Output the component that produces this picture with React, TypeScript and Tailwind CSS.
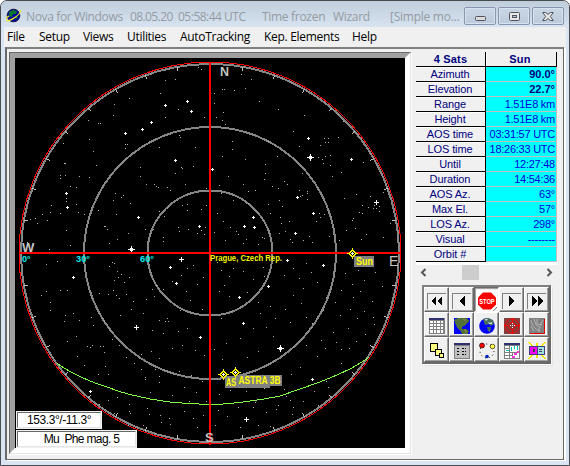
import type { ReactNode } from "react";

const menu = [
  { label: "File", width: "w-[32px]" },
  { label: "Setup", width: "w-[44px]" },
  { label: "Views", width: "w-[44px]" },
  { label: "Utilities", width: "w-[53px]" },
  { label: "AutoTracking", width: "w-[84px]" },
  { label: "Kep. Elements", width: "w-[88px]" },
  { label: "Help", width: "w-[40px]" },
];

const rows = [
  ["Azimuth", "90.0°"],
  ["Elevation", "22.7°"],
  ["Range", "1.51E8 km"],
  ["Height", "1.51E8 km"],
  ["AOS time", "03:31:57 UTC"],
  ["LOS time", "18:26:33 UTC"],
  ["Until", "12:27:48"],
  ["Duration", "14:54:36"],
  ["AOS Az.", "63°"],
  ["Max El.", "57°"],
  ["LOS Az.", "298°"],
  ["Visual", "--------"],
  ["Orbit #", ""],
];

// faint stars, one pixel each
const faint =
  "198,67 175,79 165,80 201,69 160,93 129,98 114,104 178,109 113,115 165,117 204,117 88,120 100,123 98,123 89,139 63,143 125,144 127,144 125,148 93,151 64,163 65,163 96,165 179,135 180,137 159,147 195,147 181,167 182,168 193,166 175,173 60,175 65,175 60,178 79,176 89,177 140,167 140,176 146,184 154,184 156,186 158,187 170,190 167,187 185,184 206,188 70,186 76,187 66,198 66,201 76,204 115,193 113,200 121,197 130,203 123,195 51,205 50,212 60,213 42,214 35,218 30,219 37,223 47,220 66,230 78,212 84,214 98,210 116,214 104,226 105,226 107,229 117,239 128,233 145,229 163,237 163,241 179,231 178,227 188,229 197,233 182,205 187,204 187,210 206,205 201,209 159,211 164,216 201,230 204,234 49,249 70,245 27,242 33,245 109,243 153,229 " +
  "241,74 251,79 222,89 224,89 234,90 245,88 214,93 214,103 259,101 278,109 304,115 223,112 216,117 222,120 225,124 338,114 343,121 293,131 268,141 232,141 324,138 328,142 325,142 328,138 320,145 338,137 232,149 245,159 222,156 299,146 325,156 330,155 322,159 323,163 330,165 318,157 277,156 265,164 363,162 341,172 332,176 302,173 265,173 264,179 284,181 287,184 278,188 272,186 248,191 255,190 307,191 307,193 302,195 300,196 307,199 299,190 243,184 228,176 221,193 219,185 233,200 248,203 268,204 279,200 282,206 270,213 280,217 289,221 281,223 285,231 279,233 290,239 292,242 303,240 309,236 312,242 316,221 320,217 324,214 319,213 329,236 332,227 344,198 356,194 370,196 374,205 376,208 373,208 379,206 379,211 368,207 362,205 359,212 362,213 353,218 352,220 355,228 346,230 339,240 361,239 366,234 383,237 390,223 383,192 223,221 214,232 230,227 236,231 238,234 225,240 246,239 262,237 264,238 243,243 258,244 217,213 205,227 " +
  "46,264 57,261 109,266 112,262 114,263 117,271 121,274 129,277 118,277 114,280 124,282 60,290 46,291 41,295 99,293 108,294 50,302 67,290 113,290 116,295 119,298 126,294 133,301 146,299 152,289 156,285 163,289 154,296 172,281 181,275 187,268 193,265 203,277 197,284 186,291 190,300 180,310 202,309 50,310 65,315 73,313 64,321 79,320 91,317 93,325 104,321 120,315 131,309 143,313 159,320 165,321 168,321 167,318 152,330 163,333 178,331 187,328 76,336 67,341 87,346 90,347 92,345 100,346 103,346 104,352 112,339 119,345 77,356 84,365 105,366 126,357 141,354 151,351 159,358 172,348 182,345 195,350 204,355 134,363 141,369 155,369 98,374 108,374 145,377 145,379 159,376 159,382 179,371 191,375 202,381 184,387 196,392 172,395 150,392 129,404 129,411 130,413 147,408 149,414 160,415 161,422 169,418 170,424 184,411 193,418 189,401 203,415 117,397 108,400 99,404 114,413 128,425 143,425 155,433 197,427 206,401 " +
  "217,262 221,270 229,276 233,268 243,271 255,260 263,267 264,276 253,279 224,285 219,291 229,296 247,292 258,302 284,275 293,268 299,278 306,263 311,272 317,282 303,288 293,295 301,303 285,309 270,306 275,318 260,313 231,311 221,318 240,338 253,328 266,327 273,336 226,343 214,349 222,359 247,357 258,351 290,322 306,317 312,323 323,310 335,302 326,297 341,290 352,284 345,273 358,270 364,280 375,272 382,286 353,297 360,291 372,301 350,309 340,315 357,318 333,332 349,348 348,328 364,311 373,317 321,340 306,345 317,356 325,348 336,342 300,367 291,374 314,391 326,381 341,363 284,389 290,400 303,401 318,405 328,387 278,405 266,412 254,400 253,407 255,402 238,407 227,416 218,410 215,425 240,427 258,425 270,426 276,409 293,407 292,414 286,396 219,394 230,390 246,391 264,388 341,349 356,341 365,334 374,324";

// [x, y, size]
const bright = [
  [187, 101, 1], [165, 105, 1], [191, 111, 1], [151, 122, 1], [142, 129, 1], [125, 133, 1], [175, 160, 1],
  [66, 193, 1], [67, 207, 1], [138, 217, 1], [199, 226, 1], [131, 249, 3], [310, 157, 3], [308, 138, 1],
  [351, 159, 1], [376, 202, 2], [297, 197, 1], [313, 213, 1], [253, 217, 1], [244, 226, 1], [254, 227, 1],
  [295, 233, 1], [212, 169, 1], [181, 259, 2], [170, 267, 1], [176, 283, 1], [73, 277, 1], [136, 327, 2],
  [200, 337, 1], [90, 391, 1], [287, 260, 1], [323, 265, 1], [268, 286, 1], [239, 297, 1], [243, 323, 1],
  [280, 348, 3], [312, 379, 1], [246, 419, 2],
];

const faintPath = faint
  .split(" ")
  .map((p) => `M${p}h1v1h-1z`)
  .join("");

const brightPath = bright
  .map(([x, y, arm]) => {
    const n = arm * 2 + 1;
    let d = `M${x - arm},${y}h${n}v1h-${n}zM${x},${y - arm}h1v${n}h-1z`;
    if (arm === 3) d += `M${x - 1},${y - 1}h3v3h-3z`;
    return d;
  })
  .join("");

const ticks = Array.from({ length: 36 }, (_, i) => {
  const a = (i * Math.PI) / 18;
  return { x1: 210 + 189 * Math.sin(a), y1: 253 - 189 * Math.cos(a), x2: 210 + 185 * Math.sin(a), y2: 253 - 185 * Math.cos(a) };
});

function Satellite({ x, y }: { x: number; y: number }) {
  return (
    <g shapeRendering="crispEdges">
      <path d={`M${x - 5},${y}h11v1h-11zM${x},${y - 5}h1v11h-1z`} fill="#ffff00" />
      <path d={`M${x - 3},${y + 0.5}l3.5,-3.5l3.5,3.5l-3.5,3.5z`} fill="#000" stroke="#ffff00" />
      <path d={`M${x - 1},${y}h3v1h-3zM${x},${y - 1}h1v3h-1z`} fill="#fff" />
    </g>
  );
}

function SkyMap() {
  return (
    <svg className="block h-[390px] w-[390px] bg-black font-['Liberation_Sans',sans-serif]" viewBox="15 58 390 390">
      <g fill="none" shapeRendering="crispEdges">
        <circle cx="210" cy="253" r="189" stroke="#868686" strokeWidth="2" />
        <circle cx="210" cy="253" r="126" stroke="#868686" strokeWidth="2" />
        <circle cx="210" cy="253" r="62.5" stroke="#868686" strokeWidth="2" />
        {ticks.map((t, i) => (
          <line key={i} {...t} stroke="#c0c0c0" />
        ))}
        <circle cx="210" cy="253" r="191" stroke="#ff0000" />
        <polyline
          points="57,363.5 69,371 83,378 95,383 107,387 118,391 130,394.5 150,399 170,402 188,403.5 210,404.5 223,404 240,402.5 264,399 280,396 300,389 320,382 337,375 352,368 369,357.5"
          stroke="#80ff40"
        />
      </g>
      <path d={faintPath} fill="#b4b4b4" shapeRendering="crispEdges" />
      <path d={brightPath} fill="#ffffff" shapeRendering="crispEdges" />
      <path d="M209,63h2v382h-2zM20,252h381v2h-381z" fill="#ff0000" shapeRendering="crispEdges" />
      <g fill="#c4c4c4" fontSize="13" fontWeight="700">
        <text x="220" y="76" textLength="9" lengthAdjust="spacingAndGlyphs">N</text>
        <text x="22" y="252">W</text>
        <text x="389" y="266" fontWeight="400" fontSize="14">E</text>
        <text x="205" y="442">S</text>
      </g>
      <g fill="#00f0f0" fontSize="9" fontWeight="700">
        <text x="22" y="262">0°</text>
        <text x="76" y="262" textLength="14" lengthAdjust="spacingAndGlyphs">30°</text>
        <text x="140" y="262" textLength="14" lengthAdjust="spacingAndGlyphs">60°</text>
      </g>
      <text x="210" y="261" fill="#f4f400" fontSize="9" fontWeight="700" textLength="72" lengthAdjust="spacingAndGlyphs">
        Prague, Czech Rep.
      </text>
      <Satellite x={352} y={253} />
      <path d="M354,256h20v11h-20zM225,376h45v12h-45zM237,375h45v11h-45z" fill="#808080" />
      <g fill="#ffff00" fontSize="10" fontWeight="700">
        <text x="356" y="265" textLength="17" lengthAdjust="spacingAndGlyphs">Sun</text>
        <text x="226" y="386" textLength="10" lengthAdjust="spacingAndGlyphs">AS</text>
        <text x="238.5" y="384" textLength="42" lengthAdjust="spacingAndGlyphs">ASTRA 3B</text>
      </g>
      <Satellite x={223} y={374} />
      <Satellite x={235} y={372} />
    </svg>
  );
}

function Caption({ children }: { children: ReactNode }) {
  return (
    <div className="flex h-[18px] w-8 items-center justify-center rounded-[2px] border border-[#8696ad] bg-linear-to-b from-[#c9d6e5] to-[#bccbdc] shadow-[inset_0_0_0_1px_#d8e3ef]">
      {children}
    </div>
  );
}

function TitleBar() {
  return (
    <div className="flex h-[26px] shrink-0 items-center bg-linear-to-b from-[#c0cddb] to-[#d7e3f0] pr-1 pl-[5px]">
      <svg className="mt-1 mr-[4px] h-4 w-4 shrink-0" viewBox="0 0 16 16">
        <circle cx="7.5" cy="7.5" r="6.3" fill="#0000a8" stroke="#101040" />
        <path d="M3,4l4,-2l4,1l-1,3l-3,0l-1,3l-3,-1zM9,8l3,1l-2,3z" fill="#087830" />
        <path d="M0,12c1,3 14,-4 15,-10M0,12c-1,-2 2,-3 3,-4" fill="none" stroke="#e8e820" strokeWidth="1.2" />
      </svg>
      <div className="mt-[6px] flex h-[18px] w-[438px] shrink-0 items-center whitespace-pre text-[12px] text-[#939ba3]">
        <span className="w-[104px] shrink-0 tracking-[-0.35px]">Nova for Windows</span>
        <span className="w-[48px] shrink-0 tracking-[-0.6px]">08.05.20</span>
        <span className="w-[84px] shrink-0 tracking-[-0.5px]">05:58:44 UTC</span>
        <span className="w-[71px] shrink-0 tracking-[-0.3px]">Time frozen</span>
        <span className="w-[57px] shrink-0 tracking-[-0.3px]">Wizard</span>
        <span className="shrink-0 tracking-[-0.25px]">[Simple mo...</span>
      </div>
      <div className="mt-1 flex gap-[2px]">
        <Caption>
          <svg className="mt-1 h-[5px] w-[11px]" viewBox="0 0 11 5">
            <rect x=".5" y=".5" width="10" height="4" rx="1" fill="#ddd" stroke="#52525c" />
          </svg>
        </Caption>
        <Caption>
          <svg className="h-[9px] w-[11px]" viewBox="0 0 11 9">
            <rect x=".5" y=".5" width="10" height="8" rx="1" fill="#e8e8e8" stroke="#52525c" />
            <rect x="3.5" y="3.5" width="4" height="2" fill="#bccbdc" stroke="#52525c" />
          </svg>
        </Caption>
        <Caption>
          <svg className="h-[9px] w-[12px]" viewBox="0 0 12 9">
            <path d="M.7,.5h3l2.3,2l2.3,-2h3l-3,4l3,4h-3l-2.3,-2l-2.3,2h-3l3,-4z" fill="#e8e8e8" stroke="#52525c" />
          </svg>
        </Caption>
      </div>
    </div>
  );
}

function DataTable() {
  return (
    <div className="h-[213px] w-[141px] bg-white font-['Liberation_Sans',sans-serif] text-[11px] leading-[14px] text-[#000080]">
      <div className="flex h-[15px] border-b border-black text-center font-bold">
        <div className="w-[70px] border-r border-black bg-[#f0f0f0] tracking-[0.2px]">4 Sats</div>
        <div className="w-[71px] border-r border-l border-r-black border-l-white bg-[#f0f0f0] pr-[3px] tracking-[0.2px]">Sun</div>
      </div>
      {rows.map(([name, value], i) => (
        <div key={name} className="flex h-[15px]">
          <div className="w-[70px] border-r border-b border-black bg-[#f0f0f0] pr-px text-center tracking-[-0.1px] shadow-[inset_0_1px_#fff]">{name}</div>
          <div
            className={`w-[71px] border-r border-b border-[#c0c0c0] bg-[#00ffff] pr-px text-right whitespace-nowrap ${
              i < 2 ? "font-bold" : "tracking-[-0.25px] text-[#0000d8]"
            }`}
          >
            {value}
          </div>
        </div>
      ))}
    </div>
  );
}

function ScrollBar() {
  return (
    <div className="flex h-[15px] w-[141px] items-center justify-between bg-[#f0f0f0] px-[4px]">
      <svg className="h-[9px] w-[7px]" viewBox="0 0 7 9">
        <path d="M5.5,1L2,4.5L5.5,8" fill="none" stroke="#555" strokeWidth="2" />
      </svg>
      <div className="-ml-[32px] h-[15px] w-[17px] bg-[#cdcdcd]" />
      <svg className="h-[9px] w-[7px]" viewBox="0 0 7 9">
        <path d="M1.5,1L5,4.5L1.5,8" fill="none" stroke="#555" strokeWidth="2" />
      </svg>
    </div>
  );
}

// glyphs share a 22x22 grid
const frame = <path d="M2.5,20V4.5H21" fill="none" stroke="#808080" />;

const tools: ReactNode[] = [
  <>
    {frame}
    <path d="M11,7v10l-5,-5zM17,7v10l-5,-5z" fill="#000" />
  </>,
  <>
    {frame}
    <path d="M15,7v10l-6,-5z" fill="#000" />
  </>,
  <>
    <path d="M1,1h21v17l-4,4h-17z" fill="#fff" />
    <path d="M22,18l-4,4" stroke="#808080" />
    <path d="M8,3.5h8l5,5v7l-5,5h-8l-5,-5v-7z" fill="#ff0000" />
    <text x="4.2" y="14.8" fill="#fff" fontSize="7.5" fontWeight="700" textLength="15.5" lengthAdjust="spacingAndGlyphs">STOP</text>
  </>,
  <>
    {frame}
    <path d="M9,7v10l6,-5z" fill="#000" />
  </>,
  <>
    {frame}
    <path d="M7,7v10l5,-5zM13,7v10l5,-5z" fill="#000" />
  </>,
  <>
    <rect x="4" y="4" width="16" height="16" fill="#808080" />
    <rect x="4" y="4" width="15" height="2" fill="#303070" />
    <path d="M5,7h3v2h-3zM9,7h2v2h-2zM12,7h3v2h-3zM16,7h2v2h-2zM5,10h3v2h-3zM9,10h2v2h-2zM12,10h3v2h-3zM16,10h2v2h-2zM5,13h3v2h-3zM9,13h2v2h-2zM12,13h3v2h-3zM16,13h2v2h-2zM5,16h3v3h-3zM9,16h2v3h-2zM12,16h3v3h-3zM16,16h2v3h-2z" fill="#fff" />
  </>,
  <>
    <rect x="4" y="4" width="16" height="16" fill="#0000ff" />
    <path d="M4,6l2,-1l2,-1h9l2,3l-2,2l-1,2l-3,1l-2,2l2,1h3l3,2l-1,3h-6l-1,-3l-3,-2l-2,-4l-1,-3z" fill="#4f7038" />
    <path d="M13,5h3v2h-2zM14,15l3,1v2l-2,1z" fill="#807848" />
  </>,
  <>
    <circle cx="12" cy="12" r="7.8" fill="#0000ff" />
    <path d="M8,5l5,-1l5,2l1,4l-3,2l-2,-2l-4,1l-1,-3zM12,13l4,0l-1,5l-2,-1z" fill="#487058" />
    <path d="M10,5h3l-2,2zM13,8l2,1l2,-1v2h-3z" fill="#dce8e8" />
  </>,
  <>
    <rect x="4" y="4" width="16" height="16" fill="#804040" />
    <g fill="none" stroke="#ff0000">
      <circle cx="12" cy="12" r="7" />
      <circle cx="12" cy="12" r="3.5" />
      <path d="M4,11.5h5M15,11.5h5M12.5,4v5M12.5,15v5" />
    </g>
    <path d="M12.5,9v6M10,11.5h5" stroke="#fff" strokeDasharray="1 1" />
  </>,
  <>
    <rect x="4" y="4" width="16" height="16" fill="#808080" />
    <path d="M5,19.5h14.5V5" fill="none" stroke="#e00000" />
    <path d="M6,6c1,5 3,9 9,11M9,5l2,6l5,3M12,5v5l5,1M14,14v4M6,12l3,5M18,6l-3,5" fill="none" stroke="#c0c0c0" strokeWidth=".8" />
  </>,
  <g fill="#ffff80" stroke="#000">
    <rect x="5.5" y="4.5" width="7" height="8" />
    <rect x="10.5" y="10.5" width="6" height="6" />
    <rect x="14.5" y="14.5" width="4" height="4" />
  </g>,
  <>
    <rect x="4" y="4" width="16" height="16" fill="#808080" />
    <rect x="4" y="4" width="16" height="2" fill="#303070" />
    <rect x="5" y="7" width="14" height="12" fill="#c0c0c0" />
    <path d="M7,9.5h3M12,9.5h4M7,12.5h3M12,12.5h4M7,15.5h3M12,15.5h4" stroke="#000" strokeDasharray="2 1" />
  </>,
  <>
    <circle cx="12" cy="12" r="7" fill="none" stroke="#000" strokeDasharray="1 3" />
    <circle cx="7" cy="6.5" r="2.5" fill="#ff0000" stroke="#000" strokeWidth=".6" />
    <circle cx="17.5" cy="7.5" r="2.3" fill="#ffff40" stroke="#000" strokeWidth=".6" />
    <circle cx="12" cy="17.5" r="1.8" fill="#0020c0" />
  </>,
  <>
    <rect x="4" y="4" width="16" height="16" fill="#808080" />
    <rect x="4" y="4" width="16" height="2" fill="#303070" />
    <path d="M5,7h4v2h-4zM5,10h4v3h-4zM5,14h4v2h-4zM5,17h4v2h-4zM10,14h2v2h-2zM10,17h2v2h-2zM13,14h6v5h-6zM10,7h9v6h-9z" fill="#fff" />
    <path d="M11.5,8v4M14.5,7v3M17.5,7v4M6,11.5h3" stroke="#00c0c0" />
    <path d="M14,14h3v2h-3zM12,17h3v2h-3zM17,12h2v2h-2z" fill="#ff30e0" />
  </>,
  <>
    <path d="M4,3l3,4M20,3l-3,4M4,20l3,-4M20,20l-3,-4M12,4v3M12,16v3" stroke="#f0e800" strokeWidth="1.5" />
    <rect x="4" y="7" width="16" height="9" fill="#404080" />
    <rect x="5" y="8" width="7" height="7" fill="#ff00ff" />
    <rect x="8" y="10" width="2" height="3" fill="#404040" />
    <rect x="13" y="8" width="6" height="7" fill="#a0e0e0" />
    <path d="M14,10.5h3M14,12.5h3" stroke="#404060" />
  </>,
];

// round glyphs look better antialiased
const smooth = [2, 7, 8, 9, 12];

function Toolbar() {
  return (
    <div className="grid h-[79px] w-[129px] grid-cols-[repeat(5,25px)] grid-rows-[25px_25px_25px] border-2 border-[#696969] border-t-[#808080] border-l-[#808080] shadow-[1px_1px_#fff,2px_2px_#e3e3e3]">
      {tools.map((icon, i) => (
        <button
          key={i}
          className={`h-[25px] w-[25px] border bg-[#f0f0f0] ${
            i === 2
              ? "border-[#696969] border-r-white border-b-white shadow-[inset_1px_1px_#a0a0a0]"
              : "border-white border-r-[#696969] border-b-[#696969] shadow-[inset_-1px_-1px_#a0a0a0]"
          }`}
        >
          <svg
            className="block h-[22px] w-[22px] overflow-visible font-['Liberation_Sans',sans-serif] leading-none"
            viewBox="0 0 22 22"
            shapeRendering={smooth.includes(i) ? "auto" : "crispEdges"}
          >
            {icon}
          </svg>
        </button>
      ))}
    </div>
  );
}

function InfoBox({ className, children }: { className: string; children: ReactNode }) {
  return (
    <div className={`h-[18px] border border-[#f0f0f0] bg-white ${className}`}>
      <div className="h-4 border border-[#e3e3e3] border-t-[#696969] border-l-[#696969] text-center leading-[14px] whitespace-pre">
        {children}
      </div>
    </div>
  );
}

export default function App() {
  return (
    <div className="flex h-[466px] w-[570px] flex-col overflow-hidden rounded-t-[7px] border border-[#4b4b52] bg-[#d9e5f3] font-['Open_Sans','Noto_Sans',sans-serif]">
      <TitleBar />
      <div className="mx-[3px] flex h-5 shrink-0 items-center bg-[#f0f0f0] pl-[3px] text-[12px] text-black">
        {menu.map((m) => (
          <span key={m.label} className={`${m.width} shrink-0 whitespace-nowrap tracking-[-0.3px]`}>
            {m.label}
          </span>
        ))}
      </div>
      <div className="mr-[5px] ml-[4px] flex h-[413px] shrink-0 border-t-2 border-r border-b border-l-2 border-[#696969] border-t-[#808080] bg-[#f0f0f0] shadow-[2px_1px_#fff]">
        <div className="relative mt-[3px] ml-[2px] h-[402px] w-[402px] shrink-0 border border-[#696969] border-r-[#e3e3e3] border-b-[#e3e3e3] shadow-[1px_1px_#fff]">
          <div className="h-[400px] w-[400px] border-[5px] border-[#a0a0a0] border-r-white border-b-white">
            <SkyMap />
          </div>
          <div className="absolute bottom-[5px] left-[6px] flex flex-col gap-px font-['Liberation_Sans',sans-serif] text-[12px] text-black">
            <InfoBox className="w-[86px]">
              <span className="tracking-[-0.4px]">153.3°/-11.3°</span>
            </InfoBox>
            <InfoBox className="w-[121px]">
              <span className="ml-[10px] tracking-[-0.65px]">Mu  Phe mag. 5</span>
            </InfoBox>
          </div>
        </div>
        <div className="ml-[5px] flex shrink-0 flex-col pt-[3px]">
          <DataTable />
          <ScrollBar />
          <div className="mt-[5px] ml-[6px]">
            <Toolbar />
          </div>
        </div>
      </div>
    </div>
  );
}
